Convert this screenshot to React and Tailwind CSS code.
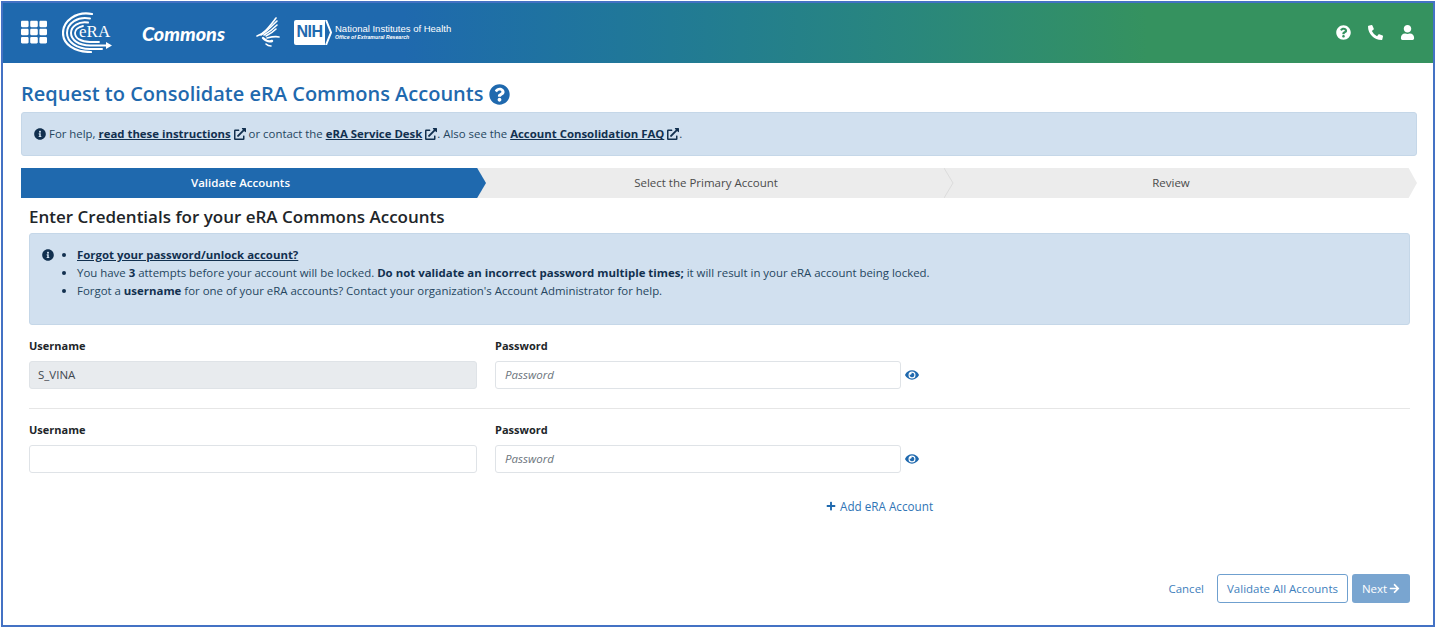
import React from "react";
import {
  FaArrowRight,
  FaExternalLinkAlt,
  FaEye,
  FaInfoCircle,
  FaPhoneAlt,
  FaPlus,
  FaQuestionCircle,
  FaTh,
  FaUser,
} from "react-icons/fa";

function EraLogo() {
  return (
    <div className="relative w-[50px] h-[42px] shrink-0">
      <svg width="50" height="42" viewBox="0 0 50 42" fill="none" stroke="white" strokeLinecap="round" className="absolute left-0 top-0">
        <path d="M30 3 C14 0 1 10 1 22 C1 33 12 41 29 41" strokeWidth="2.200" />
        <path d="M28 7.500 C16 5 5 12 5 22 C5 31 15 38 28 38 L40 38" strokeWidth="2" />
        <path d="M26 11.500 C17 10 9 15 9 22 C9 29 17 34.500 28 34.500 L45 34.500" strokeWidth="2" />
        <path d="M21 15 C16 16 13 19 13 22 C13 27 19 31 28 31 L37 31" strokeWidth="1.800" />
        <path d="M44 31 L50 34.500 L44 38 Z" fill="white" stroke="none" />
      </svg>
      <span className="absolute left-[17px] top-[11px] text-[17px] leading-[20px] text-white font-['Liberation_Serif',serif]">eRA</span>
    </div>
  );
}

function HhsLogo() {
  return (
    <svg width="24" height="30" viewBox="0 0 24 30" fill="none" stroke="white" strokeWidth="1.600" strokeLinecap="round" className="shrink-0">
      <path d="M1 19 C8 17 13 10 20 1" />
      <path d="M5 18 C10 15 15 10 21 4" />
      <path d="M8 18 C13 15 17 12 21 8" />
      <path d="M10 19 C14 17 17 15 20 12" />
      <path d="M11 21 C15 20 19 19 23 20" />
      <path d="M7 21 C10 24 13 25 16 24" strokeWidth="2.400" />
      <path d="M10 27 C11 28 13 29 15 29" />
    </svg>
  );
}

function NihLogo() {
  return (
    <div className="flex items-center gap-[3px] shrink-0">
      <div className="flex items-center">
        <div className="flex items-center justify-center w-[31px] h-[25px] bg-white rounded-l-[2px]">
          <span className="text-[16px] leading-none font-bold text-[#1f69ae] font-['Liberation_Sans',sans-serif] tracking-[-0.5px]">NIH</span>
        </div>
        <svg width="7" height="25" viewBox="0 0 7 25" fill="none" stroke="white" strokeWidth="2">
          <path d="M1 0 L6 12.500 L1 25" />
        </svg>
      </div>
      <div className="flex flex-col font-['Liberation_Sans',sans-serif] text-white">
        <span className="text-[9.500px] leading-[11px] whitespace-nowrap">National Institutes of Health</span>
        <span className="text-[5.200px] leading-[7px] font-bold italic whitespace-nowrap">Office of Extramural Research</span>
      </div>
    </div>
  );
}

function StepChevron({ color }) {
  return (
    <svg width="10" height="30" viewBox="0 0 10 30" fill="none" stroke={color} strokeWidth="1" className="absolute right-0 top-0">
      <path d="M0 0 L9 15 L0 30" />
    </svg>
  );
}

function Stepper() {
  return (
    <div className="flex h-[30px] ml-[18px] mr-[16px] bg-[#ececec] text-[11.500px] text-[#4b4b4b] [clip-path:polygon(0_0,99.400%_0,100%_50%,99.400%_100%,0_100%)]">
      <div className="flex items-center justify-center w-[465px] pr-[26px] bg-[#1f69ae] text-white font-semibold [clip-path:polygon(0_0,98.100%_0,100%_50%,98.100%_100%,0_100%)]">
        <span>Validate Accounts</span>
      </div>
      <div className="relative flex items-center justify-center w-[468px] pr-[28px]">
        <span>Select the Primary Account</span>
        <StepChevron color="#dcdcdc" />
      </div>
      <div className="flex flex-1 items-center justify-center pr-[29px]">
        <span>Review</span>
      </div>
    </div>
  );
}

function Credentials({ username }) {
  return (
    <div className="grid grid-cols-[448px_406px_auto] gap-x-[18px]">
      <div>
        <div className="text-[11px] leading-[16px] font-bold text-[#212529] mb-[7px]">Username</div>
        <div className={"flex items-center h-[28px] px-[8px] rounded-[3px] border border-[#dfe3e7] text-[11.500px] text-[#3f4850] " + (username ? "bg-[#e8ebee]" : "bg-white")}>
          {username}
        </div>
      </div>
      <div>
        <div className="text-[11px] leading-[16px] font-bold text-[#212529] mb-[7px]">Password</div>
        <div className="flex items-center h-[28px] px-[9px] rounded-[3px] border border-[#dfe3e7] bg-white text-[11.500px] italic text-[#6c757d]">
          Password
        </div>
      </div>
      <div className="flex items-end">
        <FaEye className="-ml-[14px] mb-[7px] text-[#1f69ae] text-[14px]" />
      </div>
    </div>
  );
}

function ExtLink({ children }) {
  return (
    <a className="font-bold underline text-[#12304f]">
      {children}
      <FaExternalLinkAlt className="inline ml-[3px] mb-[2px] text-[12px]" />
    </a>
  );
}

export default function App() {
  return (
    <div className="w-[1436px] h-[628px] bg-white p-px font-['Open_Sans','Noto_Sans',sans-serif]">
      <div className="flex flex-col h-full border-2 border-[#4472c4] bg-white">
        <header className="flex items-center h-[60px] pb-[2px] pl-[18px] pr-[18px] text-white bg-gradient-to-r from-[#1f69ae] from-28% to-[#35925f] to-80%">
          <FaTh className="text-[26px] mr-[15px]" />
          <EraLogo />
          <span className="ml-[30px] mt-[3px] text-[19.800px] font-black italic font-['Lato',sans-serif]">Commons</span>
          <div className="ml-[31px] mr-[14px]">
            <HhsLogo />
          </div>
          <NihLogo />
          <div className="flex items-center gap-[17px] ml-auto">
            <FaQuestionCircle className="text-[15px]" />
            <FaPhoneAlt className="text-[15px]" />
            <FaUser className="text-[15px]" />
          </div>
        </header>

        <main className="flex flex-col flex-1 pt-[17px]">
          <h1 className="flex items-center gap-[6px] pl-[18px] h-[28px] text-[20px] font-semibold text-[#1f69ae]">
            Request to Consolidate eRA Commons Accounts
            <FaQuestionCircle className="text-[21px]" />
          </h1>

          <div className="flex items-center h-[44px] mt-[4px] ml-[18px] mr-[16px] px-[12px] rounded-[3px] bg-[#d1e0ef] border border-[#c5d7e8] text-[11.400px] text-[#254660]">
            <FaInfoCircle className="mr-[3px] text-[12px] text-[#12304f]" />
            <span>
              For help, <ExtLink>read these instructions</ExtLink> or contact the <ExtLink>eRA Service Desk</ExtLink>. Also see the <ExtLink>Account Consolidation FAQ</ExtLink>.
            </span>
          </div>

          <div className="mt-[12px]">
            <Stepper />
          </div>

          <section className="flex flex-col flex-1 pl-[26px] pr-[23px]">
            <h2 className="mt-[6px] text-[17px] leading-[26px] font-semibold text-[#212529]">Enter Credentials for your eRA Commons Accounts</h2>

            <div className="flex h-[92px] mt-[3px] pt-[12px] pl-[12px] rounded-[3px] bg-[#d1e0ef] border border-[#c5d7e8] text-[11.430px] leading-[18px] text-[#254660]">
              <FaInfoCircle className="mt-[3px] mr-[8px] text-[12px] text-[#12304f]" />
              <ul className="list-disc pl-[15px] marker:text-[#12304f]">
                <li>
                  <a className="font-bold underline text-[#12304f]">Forgot your password/unlock account?</a>
                </li>
                <li>
                  You have <b className="text-[#12304f]">3</b> attempts before your account will be locked. <b className="text-[#12304f]">Do not validate an incorrect password multiple times;</b> it will result in your eRA account being locked.
                </li>
                <li>
                  Forgot a <b className="text-[#12304f]">username</b> for one of your eRA accounts? Contact your organization's Account Administrator for help.
                </li>
              </ul>
            </div>

            <div className="mt-[13px]">
              <Credentials username="S_VINA" />
            </div>
            <hr className="mt-[19px] mb-[13px] border-[#e6e6e6]" />
            <Credentials />

            <div className="flex items-center w-[108px] ml-[797px] mt-[24px] text-[11.700px] leading-[18px] text-[#2f74b5] gap-[4px]">
              <FaPlus className="text-[10px] text-[#1f69ae]" />
              <span className="whitespace-nowrap">Add eRA Account</span>
            </div>

            <div className="flex items-center justify-end gap-[4px] mt-auto mb-[22px] text-[11.500px]">
              <span className="mr-[9px] text-[#3f7fbd]">Cancel</span>
              <span className="flex items-center justify-center w-[131px] h-[29px] rounded-[3px] border border-[#6fa0cf] text-[#3f7fbd]">Validate All Accounts</span>
              <span className="flex items-center justify-center gap-[2px] w-[58px] h-[29px] rounded-[3px] bg-[#79a5d0] text-white">
                Next <FaArrowRight className="text-[11px]" />
              </span>
            </div>
          </section>
        </main>
      </div>
    </div>
  );
}
